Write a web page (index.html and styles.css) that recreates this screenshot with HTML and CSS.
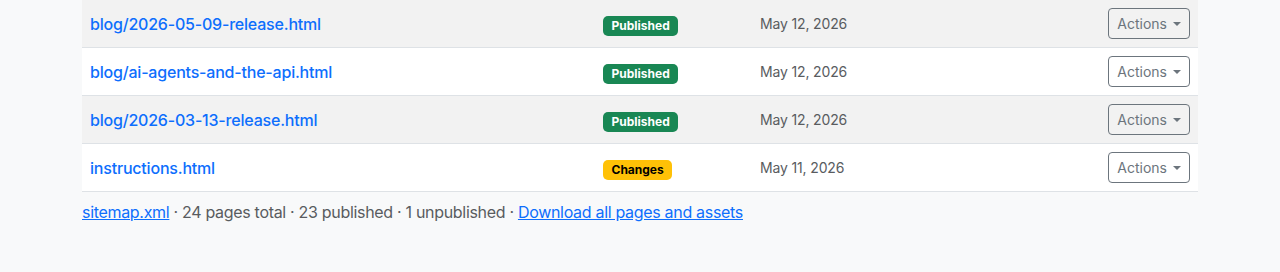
FILE: index.html
```html
<!DOCTYPE html>
<html lang="en">
<head>
    <meta charset="UTF-8">
    <meta name="viewport" content="width=device-width, initial-scale=1.0">
    <title>Pages</title>
    <link rel="stylesheet" href="styles.css">
</head>
<body>
    <div class="container">
        <table class="pages-table">
            <colgroup>
                <col class="col-path">
                <col class="col-status">
                <col class="col-date">
                <col class="col-actions">
            </colgroup>
            <tbody>
                <tr>
                    <td><a class="page-link" href="#">blog/2026-05-09-release.html</a></td>
                    <td><span class="badge badge-published">Published</span></td>
                    <td class="date">May 12, 2026</td>
                    <td class="actions"><button class="btn-actions">Actions</button></td>
                </tr>
                <tr>
                    <td><a class="page-link" href="#">blog/ai-agents-and-the-api.html</a></td>
                    <td><span class="badge badge-published">Published</span></td>
                    <td class="date">May 12, 2026</td>
                    <td class="actions"><button class="btn-actions">Actions</button></td>
                </tr>
                <tr>
                    <td><a class="page-link" href="#">blog/2026-03-13-release.html</a></td>
                    <td><span class="badge badge-published">Published</span></td>
                    <td class="date">May 12, 2026</td>
                    <td class="actions"><button class="btn-actions">Actions</button></td>
                </tr>
                <tr>
                    <td><a class="page-link" href="#">instructions.html</a></td>
                    <td><span class="badge badge-changes">Changes</span></td>
                    <td class="date">May 11, 2026</td>
                    <td class="actions"><button class="btn-actions">Actions</button></td>
                </tr>
            </tbody>
        </table>
        <p class="summary">
            <a href="#">sitemap.xml</a> · 24 pages total · 23 published · 1 unpublished · <a href="#">Download all pages and assets</a>
        </p>
    </div>
</body>
</html>
```

FILE: styles.css
```css
body {
    margin: 0;
    padding: 0;
    font-family: Inter, "Noto Sans", sans-serif;
    font-size: 16px;
    line-height: 1.5;
    color: #212529;
    background-color: #f8f9fa;
}

.container {
    width: 1116px;
    margin: 0 auto;
}

.pages-table {
    width: 100%;
    border-collapse: collapse;
    background-color: #fff;
}

.col-path {
    width: 513px;
}

.col-status {
    width: 157px;
}

.pages-table td {
    padding: 8px;
    vertical-align: middle;
    border-bottom: 1px solid #dee2e6;
}

.pages-table tr:nth-child(odd) td {
    background-color: #f2f2f2;
}

.page-link {
    color: #0d6efd;
    font-weight: 500;
    letter-spacing: -0.2px;
    text-decoration: none;
}

.badge {
    display: inline-block;
    padding: 4px 8.5px;
    font-size: 12px;
    font-weight: 700;
    line-height: 1;
    border-radius: 5px;
}

.badge-published {
    color: #fff;
    background-color: #198754;
}

.badge-changes {
    color: #000;
    background-color: #ffc107;
}

.date {
    font-size: 14px;
    letter-spacing: -0.15px;
    color: #595c5f;
}

.actions {
    text-align: right;
}

.btn-actions {
    font-family: inherit;
    font-size: 14px;
    line-height: 1.5;
    padding: 4px 8px;
    color: #6c757d;
    background: transparent;
    border: 1px solid #6c757d;
    border-radius: 4px;
    cursor: pointer;
}

.btn-actions::after {
    content: "";
    display: inline-block;
    margin-left: 6px;
    vertical-align: 3px;
    border-top: 4px solid;
    border-left: 4px solid transparent;
    border-right: 4px solid transparent;
}

.summary {
    margin: 8px 0 0;
    letter-spacing: -0.31px;
    color: #595c5f;
}

.summary a {
    color: #0d6efd;
}
```
